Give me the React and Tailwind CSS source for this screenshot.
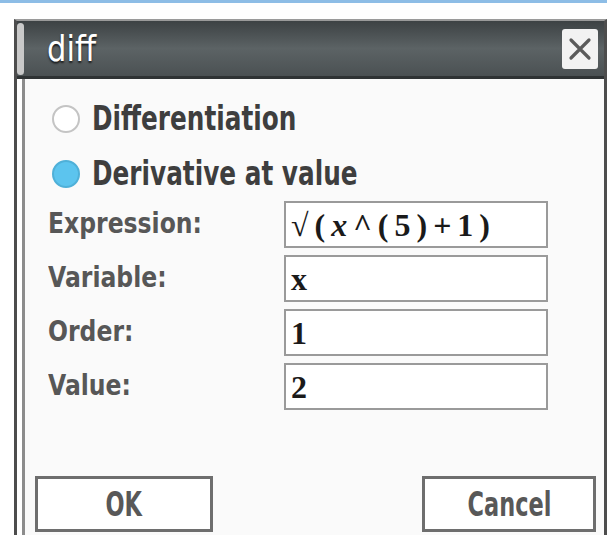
import React from 'react';

const ui = { fontFamily: '"DejaVu Sans", "Liberation Sans", sans-serif' };
const math = { fontFamily: '"Liberation Serif", "DejaVu Serif", serif' };

function Radio({ checked, label }) {
  return (
    <div className="flex h-[55px] items-center">
      <div
        className={
          checked
            ? 'ml-[27px] h-[28px] w-[28px] shrink-0 rounded-full border-2 border-[#4fb0d8] bg-[#5cc4ee]'
            : 'ml-[27px] h-[28px] w-[28px] shrink-0 rounded-full border-2 border-[#c4c4c4] bg-white'
        }
      />
      <span
        className="ml-[12px] inline-block origin-left scale-x-[0.75] whitespace-nowrap text-[33px] font-bold leading-none text-[#3e3e3e]"
        style={ui}
      >
        {label}
      </span>
    </div>
  );
}

function Field({ label, children }) {
  return (
    <div className="flex h-[47px] items-center">
      <div className="ml-[23px] w-[236px]">
        <span
          className="inline-block origin-left scale-x-[0.84] whitespace-nowrap text-[28px] font-bold leading-none text-[#575757]"
          style={ui}
        >
          {label}
        </span>
      </div>
      <div
        className="flex h-[47px] w-[264px] items-center border-2 border-[#9a9a9a] bg-white pl-[5px] text-[32px] font-bold leading-none text-[#1a1a1a]"
        style={math}
      >
        {children}
      </div>
    </div>
  );
}

function Button({ width, children }) {
  return (
    <button
      className={`flex h-[56px] ${width} items-center justify-center border-[3px] border-[#6e6e6e] bg-white`}
    >
      <span
        className="inline-block scale-x-[0.66] text-[34px] font-bold leading-none text-[#585858]"
        style={ui}
      >
        {children}
      </span>
    </button>
  );
}

export default function App() {
  return (
    <div className="flex h-[535px] w-[607px] flex-col overflow-hidden bg-white">
      <div className="h-[3px] bg-[#8dbde6]" />
      <div className="mt-[16px] ml-[14px] flex flex-1 flex-col border-l-[3px] border-r-[3px] border-t-[2px] border-[#4d4d4d] border-t-[#9a9a9a]">
        {/* title bar */}
        <div className="flex h-[58px] items-center border-b-[3px] border-[#2f3334] bg-gradient-to-b from-[#3d4244] via-[#5c6365] to-[#4b5153]">
          <div className="h-[52px] w-[7px] rounded-sm bg-[#c9c9c9]" />
          <span
            className="ml-[23px] inline-block origin-left scale-x-[0.85] text-[36px] font-medium leading-none text-white [text-shadow:0_2px_2px_#1b1d1e]"
            style={ui}
          >
            diff
          </span>
          <div className="ml-auto mr-[6px] flex h-[40px] w-[36px] items-center justify-center rounded-[3px] bg-[#f2f2f2]">
            <svg width="26" height="26" viewBox="0 0 26 26">
              <path d="M4 4L22 22M22 4L4 22" stroke="#5a5a5a" strokeWidth="3.2" strokeLinecap="round" />
            </svg>
          </div>
        </div>

        {/* dialog body */}
        <div className="ml-[5px] flex flex-1 flex-col border-l-[3px] border-[#8c8c8c] bg-[#fafafa] pt-[12px]">
          <Radio label="Differentiation" />
          <Radio checked label="Derivative at value" />
          <div className="flex flex-col gap-[7px]">
            <Field label="Expression:">
              <span className="tracking-[6px]">
                √(<i>x</i>^(5)+1)
              </span>
            </Field>
            <Field label="Variable:">x</Field>
            <Field label="Order:">1</Field>
            <Field label="Value:">2</Field>
          </div>
          <div className="mt-[66px] flex justify-between pl-[10px] pr-[8px]">
            <Button width="w-[178px]">OK</Button>
            <Button width="w-[174px]">Cancel</Button>
          </div>
        </div>
      </div>
    </div>
  );
}
